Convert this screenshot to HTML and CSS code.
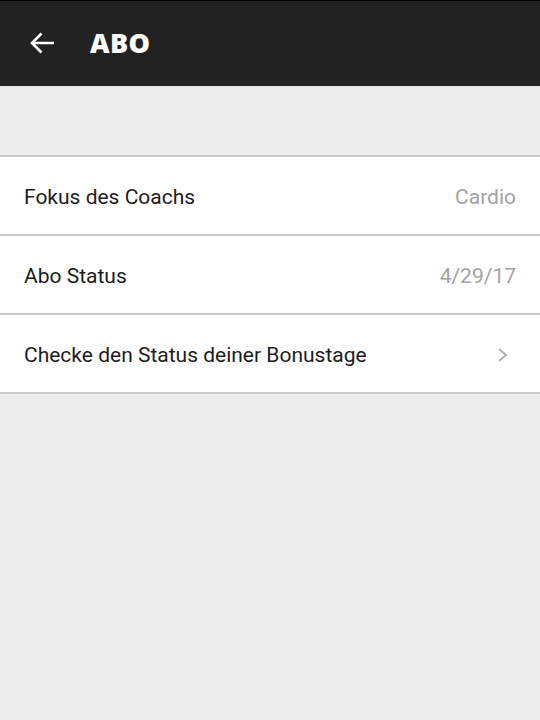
FILE: index.html
```html
<!DOCTYPE html>
<html>
<head>
<meta charset="utf-8">
<link rel="stylesheet" href="styles.css">
</head>
<body>
<header class="appbar">
  <svg class="back" width="26" height="24" viewBox="0 0 26 24"><path d="M25 12H3M12.5 2.5L3 12l9.5 9.5" fill="none" stroke="#fff" stroke-width="2.6"/></svg>
  <h1 class="title">ABO</h1>
</header>
<main class="content">
  <ul class="list">
    <li class="row"><span class="label">Fokus des Coachs</span><span class="value">Cardio</span></li>
    <li class="row"><span class="label">Abo Status</span><span class="value">4/29/17</span></li>
    <li class="row"><span class="label">Checke den Status deiner Bonustage</span><svg class="chev" width="12" height="16" viewBox="0 0 12 16"><path d="M2 2l7 6-7 6" fill="none" stroke="#b0b0b0" stroke-width="2"/></svg></li>
  </ul>
</main>
</body>
</html>
```
FILE: styles.css
```css
html, body { margin: 0; padding: 0; }
body { background: #ebebeb; width: 540px; height: 720px; overflow: hidden; font-family: Roboto, "Noto Sans", sans-serif; }
.appbar { background: #222; border-top: 1px solid #000; height: 86px; display: flex; align-items: center; padding-left: 29px; padding-bottom: 2px; box-sizing: border-box; }
.back { display: block; margin-right: 35px; }
.title { margin: 0; color: #fff; font-family: "Open Sans", sans-serif; font-weight: 800; font-size: 27px; letter-spacing: 0.3px; }
.content { padding-top: 69px; }
.list { list-style: none; margin: 0; padding: 0; background: #fff; border-top: 2px solid #c8c8cb; }
.row { height: 79px; box-sizing: border-box; border-bottom: 2px solid #c8c8cb; display: flex; align-items: center; justify-content: space-between; padding: 2px 24px 0; font-size: 21px; }
.label { color: #1c1c1c; }
.value { color: #a3a3a3; }
.chev { display: block; margin-right: 7px; }
```
